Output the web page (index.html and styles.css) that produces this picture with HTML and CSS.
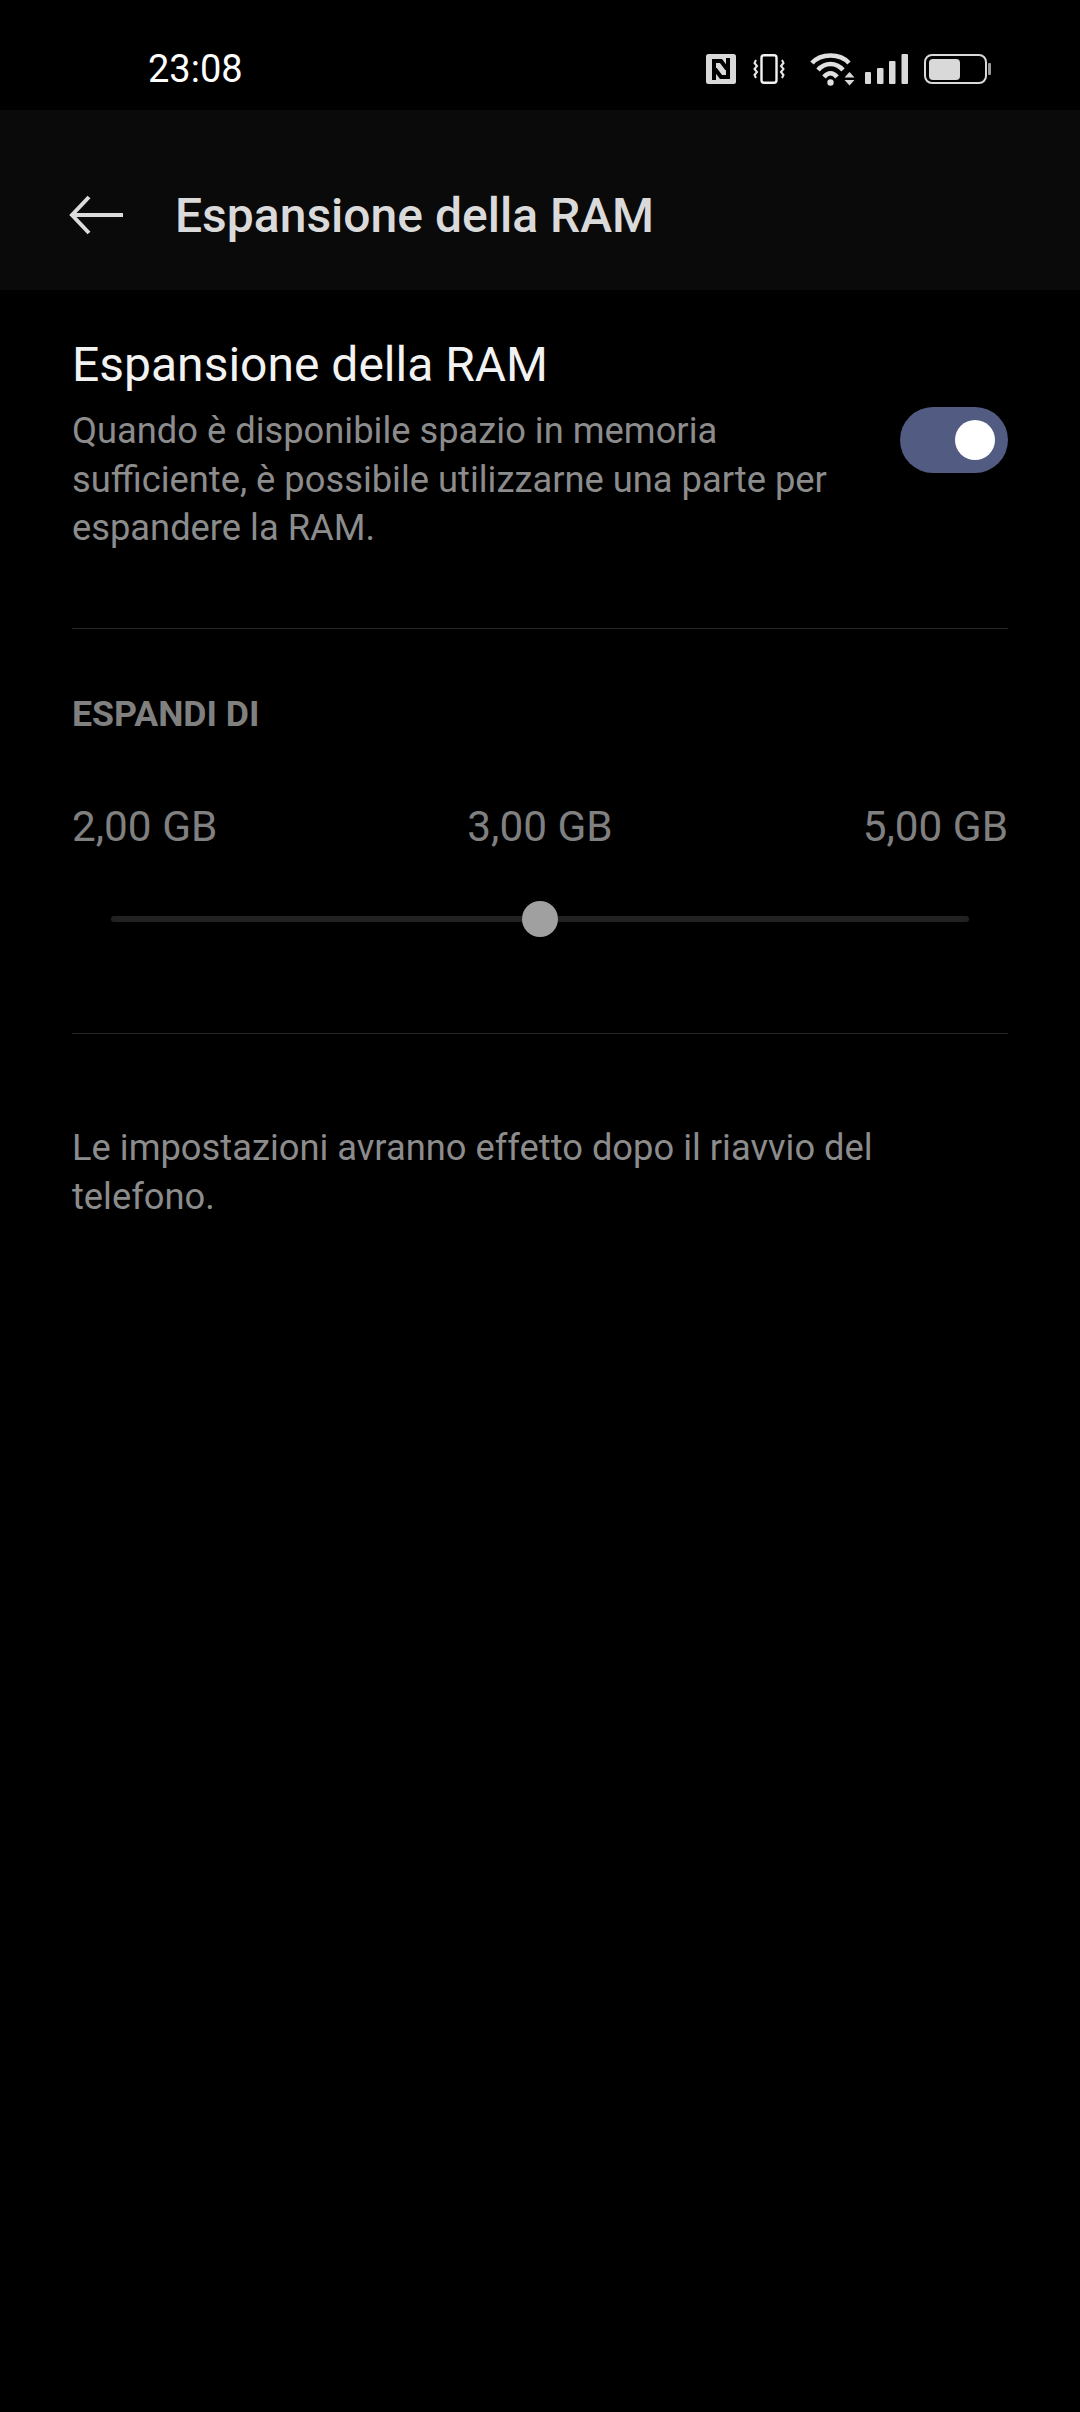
FILE: index.html
```html
<!DOCTYPE html>
<html lang="en">
<head>
  <meta charset="UTF-8">
  <meta name="viewport" content="width=device-width, initial-scale=1.0">
  <title>Espansione della RAM</title>
  <link rel="stylesheet" href="styles.css">
</head>
<body>
  <div class="status-bar">
    <span class="status-time">23:08</span>
    <div class="status-icons">
      <svg class="icon-nfc" width="30" height="30" viewBox="0 0 30 30">
        <rect width="30" height="30" rx="2.500" fill="#d9d9d9"/>
        <path d="M8 26V7h7l6 8M22 4v19h-7L9 15" fill="none" stroke="#000" stroke-width="4"/>
      </svg>
      <svg class="icon-vibrate" width="32" height="30" viewBox="0 0 32 30">
        <rect x="8.500" y="1.200" width="15" height="27.600" rx="2.500" fill="none" stroke="#f2f2f2" stroke-width="2.400"/>
        <path d="M3 6l-1.500 3 2.500 3-2.500 3 2.500 3-2.500 3 1.500 3M29 6l1.500 3-2.500 3 2.500 3-2.500 3 2.500 3-1.500 3" fill="none" stroke="#e8e8e8" stroke-width="2"/>
      </svg>
      <svg class="icon-wifi" width="45" height="33" viewBox="0 0 45 33">
        <path d="M2 10C11 0 30 0 39 10" fill="none" stroke="#e0e0e0" stroke-width="4.500"/>
        <path d="M8 17C15 9 26 9 33 17" fill="none" stroke="#e0e0e0" stroke-width="4.500"/>
        <path d="M14 24C18 19 23 19 27 24" fill="none" stroke="#e0e0e0" stroke-width="4.500"/>
        <circle cx="20.500" cy="29.500" r="3.200" fill="#e0e0e0"/>
        <path d="M39.500 19l5 5.500h-10zM34.500 27h10l-5 5.500z" fill="#d8d8d8"/>
      </svg>
      <svg class="icon-signal" width="43" height="30" viewBox="0 0 43 30">
        <rect x="0" y="18" width="6" height="12" rx="1" fill="#d9d9d9"/>
        <rect x="12" y="14" width="6.500" height="16" rx="1" fill="#d9d9d9"/>
        <rect x="24" y="7" width="6.500" height="23" rx="1" fill="#d9d9d9"/>
        <rect x="36.500" y="0" width="6.500" height="30" rx="1" fill="#d9d9d9"/>
      </svg>
      <svg class="icon-battery" width="67" height="30" viewBox="0 0 67 30">
        <rect x="1" y="1" width="61" height="28" rx="7" fill="none" stroke="#d9d9d9" stroke-width="2"/>
        <rect x="5" y="5" width="31" height="21" rx="4" fill="#d9d9d9"/>
        <rect x="64" y="9" width="3" height="12" rx="1" fill="#999"/>
      </svg>
    </div>
  </div>

  <header class="app-bar">
    <svg class="back-arrow" width="56" height="44" viewBox="0 0 56 44">
      <path d="M54 22H4M20 4L3 22l17 18" fill="none" stroke="#dcdcdc" stroke-width="4"/>
    </svg>
    <h1 class="app-title">Espansione della RAM</h1>
  </header>

  <main class="content">
    <section class="toggle-row">
      <div class="toggle-text">
        <h2 class="toggle-title">Espansione della RAM</h2>
        <p class="toggle-desc">Quando è disponibile spazio in memoria sufficiente, è possibile utilizzarne una parte per espandere la RAM.</p>
      </div>
      <div class="switch"><span class="switch-knob"></span></div>
    </section>

    <section class="expand">
      <h3 class="expand-head">ESPANDI DI</h3>
      <div class="size-labels">
        <span>2,00 GB</span>
        <span>3,00 GB</span>
        <span>5,00 GB</span>
      </div>
      <div class="slider"><span class="slider-thumb"></span></div>
    </section>

    <p class="note">Le impostazioni avranno effetto dopo il riavvio del telefono.</p>
  </main>
</body>
</html>
```

FILE: styles.css
```css
* {
  box-sizing: border-box;
}
body {
  margin: 0;
  width: 1080px;
  height: 2412px;
  overflow: hidden;
  background-color: #000;
  font-family: Roboto, "Noto Sans", sans-serif;
}
.status-bar {
  height: 110px;
  padding: 28px 89px 0 148px;
  display: flex;
  align-items: center;
  justify-content: space-between;
}
.status-time {
  color: #fff;
  font-size: 38px;
  font-weight: 400;
}
.status-icons {
  display: flex;
  align-items: center;
}
.icon-nfc {
  margin-right: 17px;
}
.icon-vibrate {
  margin-right: 25px;
}
.icon-wifi {
  margin-right: 10px;
}
.icon-signal {
  margin-right: 16px;
}
.app-bar {
  height: 180px;
  background-color: #0a0a0a;
  display: flex;
  align-items: center;
  padding: 30px 0 0 69px;
}
.back-arrow {
  margin-right: 50px;
}
.app-title {
  margin: 0;
  color: #dadada;
  font-size: 48px;
  font-weight: 500;
}
.content {
  padding: 0 72px;
}
.toggle-row {
  display: flex;
  align-items: flex-start;
  justify-content: space-between;
  padding: 42px 0 75px;
  border-bottom: 1px solid #262626;
}
.toggle-text {
  width: 780px;
}
.toggle-title {
  margin: 0 0 9px;
  color: #f2f2f2;
  font-size: 48px;
  font-weight: 400;
  line-height: 66px;
}
.toggle-desc {
  margin: 0;
  color: #8c8c8c;
  font-size: 36.3px;
  line-height: 48.5px;
}
.switch {
  width: 108px;
  height: 66px;
  border-radius: 33px;
  background-color: #525c82;
  display: flex;
  align-items: center;
  justify-content: flex-end;
  padding-right: 13px;
  margin-top: 75px;
}
.switch-knob {
  width: 40px;
  height: 40px;
  border-radius: 50%;
  background-color: #fff;
}
.expand {
  padding-top: 65px;
  height: 405px;
  border-bottom: 1px solid #262626;
}
.expand-head {
  margin: 0;
  color: #808080;
  font-size: 35.700px;
  font-weight: 700;
  line-height: 40px;
}
.size-labels {
  display: flex;
  justify-content: space-between;
  margin-top: 68px;
  color: #808080;
  font-size: 42.300px;
  line-height: 50px;
}
.slider {
  height: 6px;
  margin: 64px 39px 0;
  background-color: #222;
  border-radius: 3px;
  display: flex;
  align-items: center;
  justify-content: center;
}
.slider-thumb {
  width: 36px;
  height: 36px;
  border-radius: 50%;
  background-color: #a0a0a0;
  flex-shrink: 0;
}
.note {
  margin: 89px 0 0;
  color: #8c8c8c;
  font-size: 36.3px;
  line-height: 49px;
}
```
